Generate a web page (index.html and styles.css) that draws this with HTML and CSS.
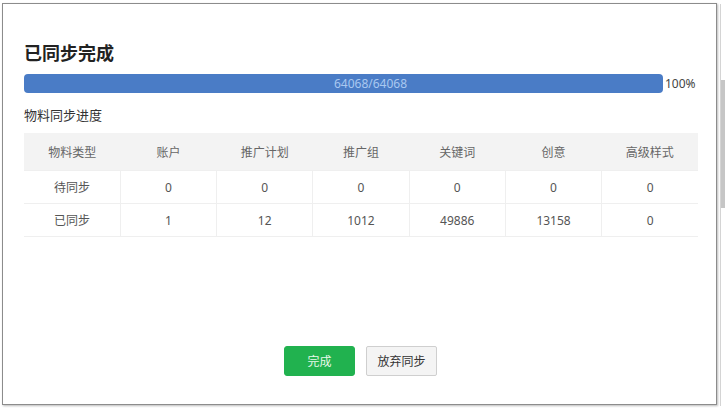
FILE: index.html
```html
<!DOCTYPE html>
<html lang="zh">

<head>
    <meta charset="utf-8">
    <meta name="viewport" content="width=device-width, initial-scale=1.0">
    <title>已同步完成</title>
    <link rel="stylesheet" href="styles.css">
</head>

<body>
    <div class="dialog">
        <h1 class="titel">已同步完成</h1>

        <div class="progress">
            <div class="bar"><span>64068/64068</span></div>
            <span class="pct">100%</span>
        </div>

        <p class="undertitel">物料同步进度</p>

        <table class="tabel">
            <thead>
                <tr>
                    <th>物料类型</th>
                    <th>账户</th>
                    <th>推广计划</th>
                    <th>推广组</th>
                    <th>关键词</th>
                    <th>创意</th>
                    <th>高级样式</th>
                </tr>
            </thead>
            <tbody>
                <tr>
                    <td>待同步</td>
                    <td>0</td>
                    <td>0</td>
                    <td>0</td>
                    <td>0</td>
                    <td>0</td>
                    <td>0</td>
                </tr>
                <tr>
                    <td>已同步</td>
                    <td>1</td>
                    <td>12</td>
                    <td>1012</td>
                    <td>49886</td>
                    <td>13158</td>
                    <td>0</td>
                </tr>
            </tbody>
        </table>

        <div class="knapper">
            <button class="knap gron">完成</button>
            <button class="knap">放弃同步</button>
        </div>
    </div>

    <div class="scroll">
        <div class="thumb"></div>
    </div>
</body>

</html>
```

FILE: styles.css
```css
body {
    margin: 0;
    height: 411px;
    display: flex;
    font-family: "Noto Sans", "Noto Sans CJK SC", sans-serif;
    color: #333;
    background-color: white;
    overflow: hidden;
}

.dialog {
    width: 715px;
    height: 402px;
    margin: 3px 0 0 2px;
    border: 1px solid #8c8c8c;
    box-shadow: 1px 1px 2px #bbb;
    padding: 0 19px 0 21px;
    box-sizing: border-box;
    display: flex;
    flex-direction: column;
}

.titel {
    font-size: 18px;
    line-height: 24px;
    font-weight: bold;
    margin: 37px 0 0 0;
    color: #222;
}

.progress {
    display: flex;
    align-items: center;
    margin-top: 9px;
}

.bar {
    width: 639px;
    height: 19px;
    background-color: #4a7cc6;
    border-radius: 4px;
    text-align: center;
    font-size: 12px;
    line-height: 19px;
    color: #a9c8f0;
    padding-left: 54px;
    box-sizing: border-box;
}

.pct {
    font-size: 12px;
    margin-left: 2px;
    color: #444;
}

.undertitel {
    font-size: 13px;
    line-height: 20px;
    margin: 12px 0 0 0;
}

.tabel {
    width: 674px;
    margin-top: 8px;
    border-collapse: collapse;
    table-layout: fixed;
    font-size: 12px;
}

.tabel th {
    background-color: #f3f3f3;
    font-weight: normal;
    color: #666;
    height: 37px;
    padding: 0;
}

.tabel td {
    height: 32px;
    padding: 0;
    text-align: center;
    border: 1px solid #efefef;
    color: #555;
}

.tabel tr td:first-child {
    border-left: none;
}

.tabel tr td:last-child {
    border-right: none;
}

.knapper {
    margin-top: auto;
    margin-bottom: 28px;
    display: flex;
    justify-content: center;
    gap: 11px;
}

.knap {
    width: 71px;
    height: 30px;
    font-family: "Noto Sans", "Noto Sans CJK SC", sans-serif;
    font-size: 12px;
    background-color: #f4f4f4;
    border: 1px solid #cfcfcf;
    border-radius: 2px;
    color: #333;
    padding: 0;
}

.gron {
    background-color: #21b24f;
    border-color: #21b24f;
    border-radius: 3px;
    color: #e8f8ea;
}

.scroll {
    width: 4px;
    margin-left: 3px;
    margin-top: 4px;
    height: 402px;
    border-left: 1px solid #d4d4d4;
}

.thumb {
    margin-top: 76px;
    height: 128px;
    background-color: #c6c6c6;
}
```
